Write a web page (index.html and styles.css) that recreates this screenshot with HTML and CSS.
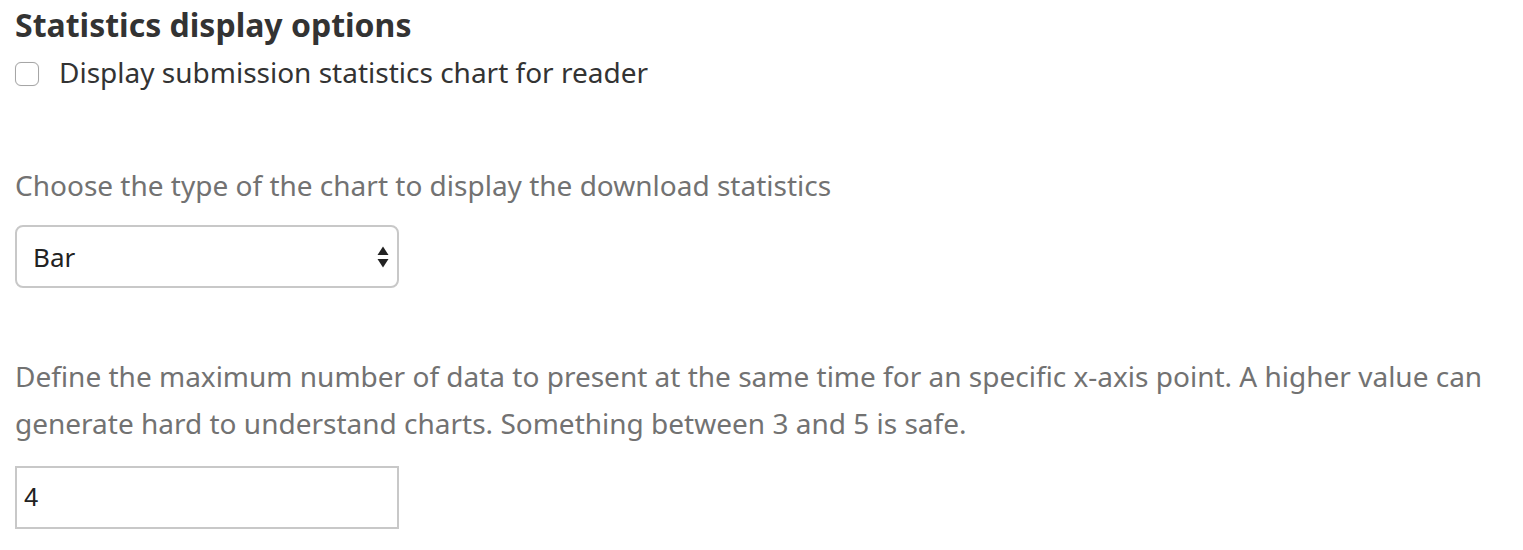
FILE: index.html
```html
<!DOCTYPE html>
<html>
<head>
<meta charset="utf-8">
<link rel="stylesheet" href="styles.css">
</head>
<body>
<div class="page">
  <h3 class="title">Statistics display options</h3>
  <label class="check">
    <span class="box"></span>
    <span class="check-text">Display submission statistics chart for reader</span>
  </label>

  <div class="field field-type">
    <p class="help">Choose the type of the chart to display the download statistics</p>
    <div class="select">
      <span class="select-value">Bar</span>
      <svg class="arrows" width="12" height="24" viewBox="0 0 12 24">
        <path d="M6 1.5 L11.5 10 L0.5 10 Z" fill="#222"/>
        <path d="M6 22.5 L11.5 14 L0.5 14 Z" fill="#222"/>
      </svg>
    </div>
  </div>

  <div class="field field-max">
    <p class="help">Define the maximum number of data to present at the same time for an specific x-axis point. A higher value can generate hard to understand charts. Something between 3 and 5 is safe.</p>
    <div class="input">4</div>
  </div>
</div>
</body>
</html>
```
FILE: styles.css
```css
html, body {
  margin: 0;
  padding: 0;
  background: #fff;
}
body {
  font-family: "Noto Sans", "Open Sans", sans-serif;
  color: #333;
}
.page {
  padding: 0 15px;
  width: 1480px;
}
.title {
  margin: 0;
  padding-top: 3px;
  font-size: 32px;
  font-weight: 700;
  line-height: 44px;
  color: #333;
}
.check {
  display: flex;
  align-items: center;
  gap: 20px;
  margin-top: 10px;
  height: 30px;
}
.box {
  width: 24px;
  height: 24px;
  border: 1px solid #a6a6a6;
  border-radius: 6px;
  box-sizing: border-box;
  background: #fff;
  box-shadow: 0 0 1px rgba(0, 0, 0, 0.15);
  margin-top: 3px;
}
.check-text {
  font-size: 28px;
  line-height: 30px;
  color: #333;
}
.help {
  margin: 0;
  font-size: 28px;
  line-height: 47px;
  color: #727272;
}
.field-type {
  margin-top: 75px;
}
.select {
  margin-top: 16px;
  width: 384px;
  height: 63px;
  box-sizing: border-box;
  border: 2px solid #c8c8c8;
  border-radius: 8px;
  display: flex;
  align-items: center;
  justify-content: space-between;
  padding: 0 8px 0 16px;
}
.select-value {
  font-size: 26px;
  color: #222;
}
.field-max {
  margin-top: 65px;
}
.input {
  margin-top: 19px;
  width: 384px;
  height: 63px;
  box-sizing: border-box;
  border: 2px solid #c8c8c8;
  display: flex;
  align-items: center;
  padding-left: 7px;
  font-family: "Liberation Sans", Arial, sans-serif;
  font-size: 26px;
  color: #222;
}
```
